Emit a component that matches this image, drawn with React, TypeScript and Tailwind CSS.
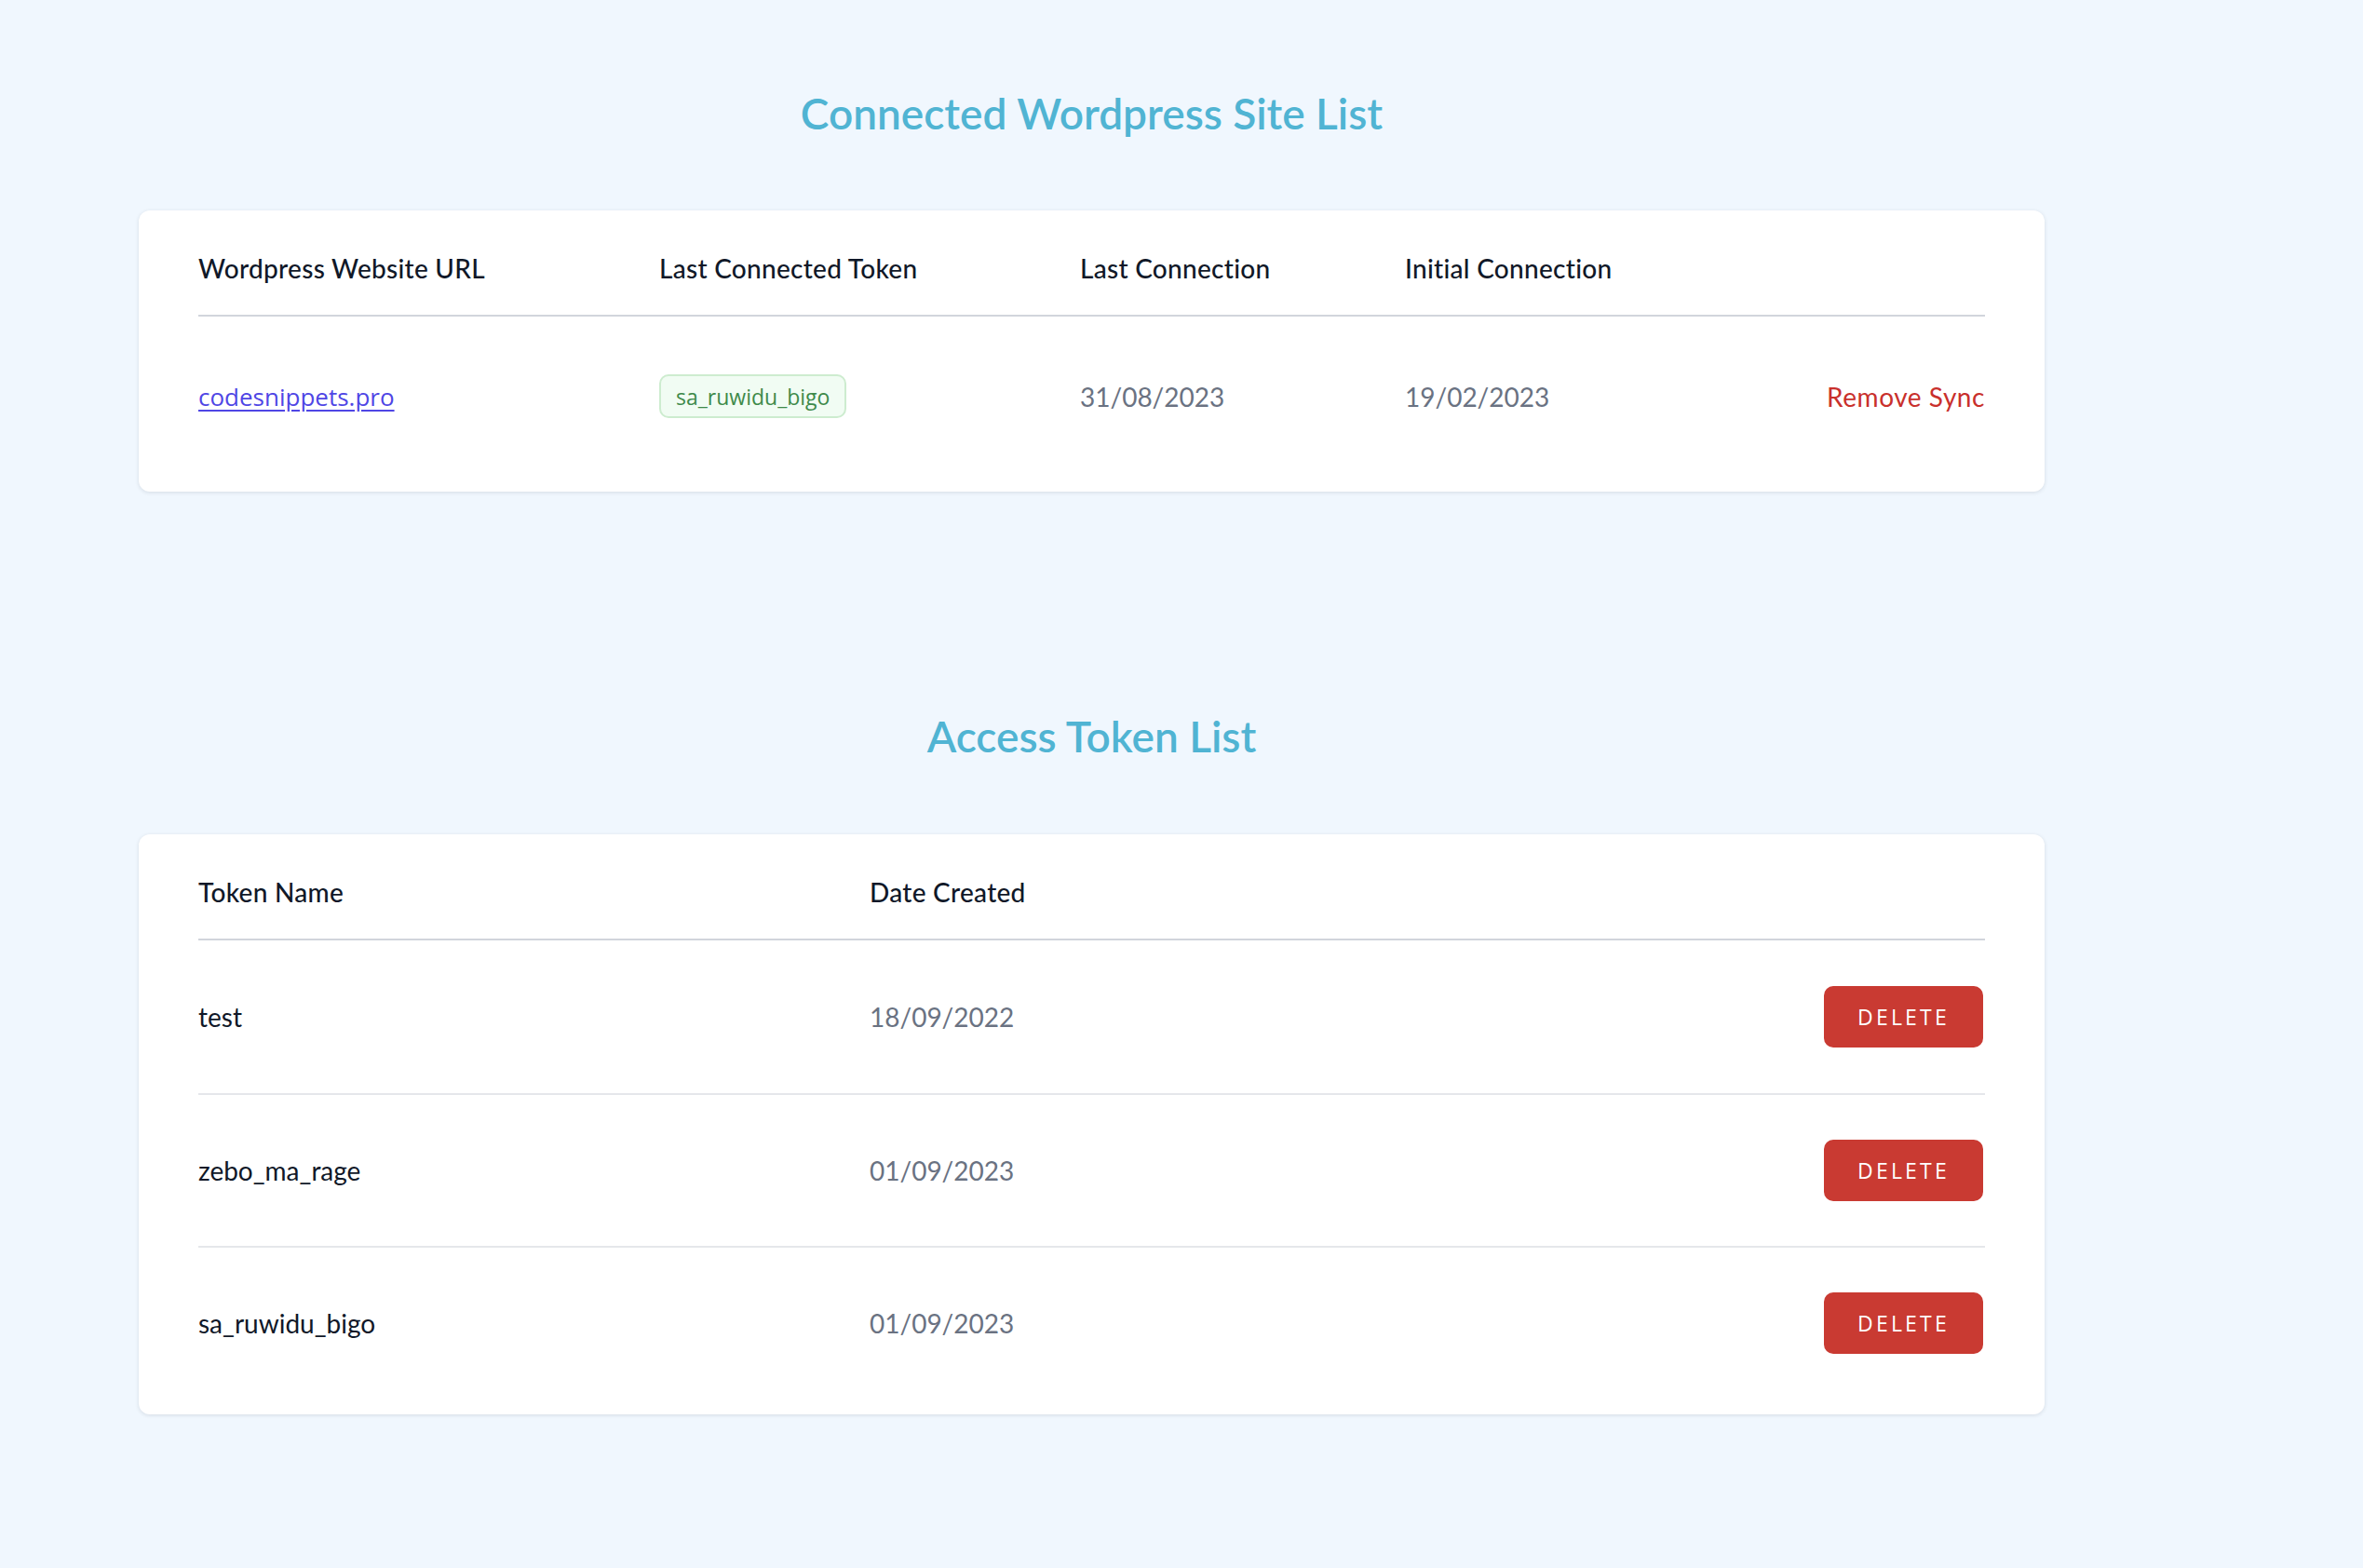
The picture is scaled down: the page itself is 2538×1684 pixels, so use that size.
import React from 'react';

interface Token {
  name: string;
  created: string;
}

const tokens: Token[] = [
  { name: 'test', created: '18/09/2022' },
  { name: 'zebo_ma_rage', created: '01/09/2023' },
  { name: 'sa_ruwidu_bigo', created: '01/09/2023' },
];

const body = { fontFamily: 'Lato, "Noto Sans", sans-serif' };
const wide = { fontFamily: '"Open Sans", "Noto Sans", sans-serif' };

const SectionTitle: React.FC<{ children: React.ReactNode }> = ({ children }) => (
  <h2 className="text-center text-[46px] leading-[56px] font-semibold text-[#50b4d3]" style={body}>
    {children}
  </h2>
);

const App: React.FC = () => {
  return (
    <div className="min-h-screen bg-[#f0f7fe] pl-[149px] pt-[94px] pb-[160px]" style={body}>
      <div className="w-[2047px]">
        <SectionTitle>Connected Wordpress Site List</SectionTitle>

        <div className="mt-[76px] bg-white rounded-xl shadow-[0_1px_4px_rgba(15,23,42,0.12)] px-16 pt-[45px] pb-[17px]">
          <div className="grid grid-cols-[495px_452px_349px_1fr] border-b-2 border-gray-300 pb-[33px] text-[28px] leading-[34px] font-medium text-gray-900 tracking-[0.01em]">
            <div>Wordpress Website URL</div>
            <div>Last Connected Token</div>
            <div>Last Connection</div>
            <div>Initial Connection</div>
          </div>
          <div className="grid grid-cols-[495px_452px_349px_1fr] items-center h-[171px] text-[28px] leading-[34px]">
            <a href="#" className="text-[26px] text-[#4f46e5] underline underline-offset-4 w-fit" style={wide}>
              codesnippets.pro
            </a>
            <div>
              <span
                className="inline-flex items-center h-[47px] px-[16px] rounded-[10px] border-2 border-[#cdeccf] bg-[#f1fcf3] text-[23px] text-[#3e8a4a]"
                style={wide}
              >
                sa_ruwidu_bigo
              </span>
            </div>
            <div className="text-gray-500">31/08/2023</div>
            <div className="flex justify-between">
              <span className="text-gray-500">19/02/2023</span>
              <span className="text-[#c9302c] tracking-[0.02em]">Remove Sync</span>
            </div>
          </div>
        </div>

        <div className="mt-[235px]">
          <SectionTitle>Access Token List</SectionTitle>
        </div>

        <div className="mt-[77px] bg-white rounded-xl shadow-[0_1px_4px_rgba(15,23,42,0.12)] px-16 pt-[45px] pb-[17px]">
          <div className="grid grid-cols-[721px_1fr] border-b-2 border-gray-300 pb-[33px] text-[28px] leading-[34px] font-medium text-gray-900 tracking-[0.01em]">
            <div>Token Name</div>
            <div>Date Created</div>
          </div>
          {tokens.map((t, i) => (
            <div
              key={t.name}
              className={`grid grid-cols-[721px_1fr_auto] items-center h-[164px] text-[28px] leading-[34px] ${
                i > 0 ? 'border-t-2 border-gray-200' : ''
              }`}
            >
              <div className="text-gray-900">{t.name}</div>
              <div className="text-gray-500">{t.created}</div>
              <button
                className="mr-[2px] w-[171px] h-[66px] rounded-[10px] bg-[#c93a32] text-white text-[23px] tracking-[0.14em] font-normal"
                style={wide}
              >
                DELETE
              </button>
            </div>
          ))}
        </div>
      </div>
    </div>
  );
};

export default App;
